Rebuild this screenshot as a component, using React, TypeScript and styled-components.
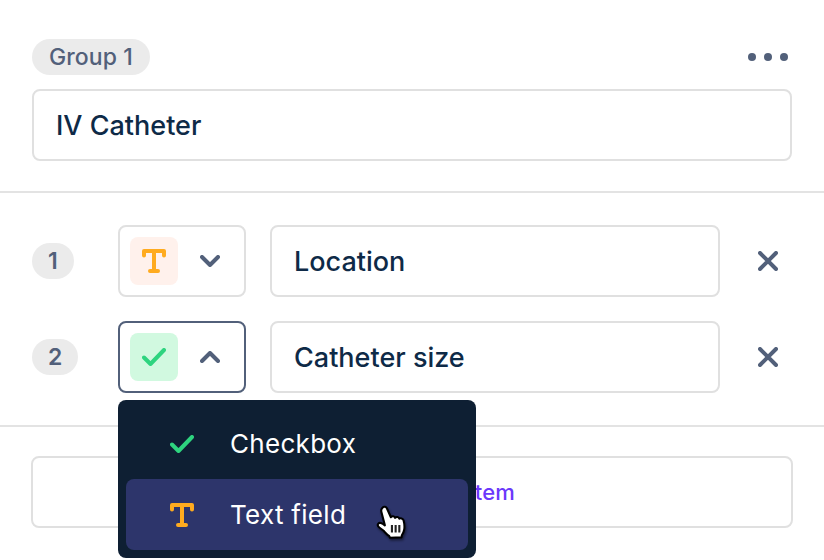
import styled, { createGlobalStyle } from 'styled-components';

const GlobalStyle = createGlobalStyle`
  html, body {
    margin: 0;
    padding: 0;
    background: #fff;
    font-family: 'Inter', 'Liberation Sans', sans-serif;
  }
`;

const Page = styled.div`
  width: 824px;
  height: 560px;
  overflow: hidden;
  box-sizing: border-box;
`;

const GroupSection = styled.section`
  padding: 39px 32px 30px;
  border-bottom: 2px solid #e3e3e3;
`;

const GroupHeader = styled.div`
  display: flex;
  align-items: center;
  justify-content: space-between;
  margin-bottom: 14px;
`;

const Pill = styled.span`
  display: inline-flex;
  align-items: center;
  justify-content: center;
  height: 36px;
  padding: 0 17px;
  box-sizing: border-box;
  border-radius: 18px;
  background: #ebebeb;
  color: #52607a;
  font-size: 23px;
  font-weight: 500;
  letter-spacing: 0.1px;
`;

const NumberPill = styled(Pill)`
  padding: 0 16px;
  font-weight: 600;
`;

const NumberCell = styled.div`
  width: 86px;
`;

const MoreIcon = styled.div`
  display: flex;
  gap: 8px;
  margin-right: 4px;
`;

const Dot = styled.i`
  display: block;
  width: 8px;
  height: 8px;
  border-radius: 50%;
  background: #52607a;
`;

const Field = styled.div`
  flex: 1;
  height: 72px;
  display: flex;
  align-items: center;
  padding: 0 22px;
  box-sizing: border-box;
  border: 2px solid #e0e0e0;
  border-radius: 8px;
  background: #fff;
  color: #0e2a47;
  font-size: 27px;
  font-weight: 500;
  letter-spacing: 0;
`;

const ItemsSection = styled.section`
  padding: 32px 32px 32px;
  display: flex;
  flex-direction: column;
  gap: 24px;
  border-bottom: 2px solid #e3e3e3;
`;

const Row = styled.div`
  display: flex;
  align-items: center;
`;

const TypeSelect = styled.div<{ $open?: boolean }>`
  position: relative;
  width: 128px;
  height: 72px;
  margin-right: 24px;
  flex-shrink: 0;
  display: flex;
  align-items: center;
  padding-left: 10px;
  box-sizing: border-box;
  border: 2px solid ${(p) => (p.$open ? '#52607a' : '#e0e0e0')};
  border-radius: 8px;
`;

const Tile = styled.div<{ $bg: string }>`
  width: 48px;
  height: 48px;
  border-radius: 8px;
  background: ${(p) => p.$bg};
  display: flex;
  align-items: center;
  justify-content: center;
  margin-right: 22px;
`;

const Chevron = styled.svg`
  display: block;
`;

const RemoveButton = styled.div`
  width: 72px;
  display: flex;
  justify-content: flex-end;
  padding-right: 14px;
  box-sizing: border-box;
`;

const Menu = styled.div`
  position: absolute;
  z-index: 2;
  top: 77px;
  left: -2px;
  width: 358px;
  height: 158px;
  padding: 8px;
  box-sizing: border-box;
  border-radius: 8px;
  background: #0e1f33;
  display: flex;
  flex-direction: column;
  justify-content: flex-end;
`;

const MenuItem = styled.div<{ $active?: boolean }>`
  position: relative;
  height: 72px;
  display: flex;
  align-items: center;
  padding-left: 44px;
  border-radius: 8px;
  background: ${(p) => (p.$active ? '#2d356b' : 'transparent')};
  color: #fff;
  font-size: 26px;
  font-weight: 400;
  letter-spacing: 0.3px;
`;

const MenuLabel = styled.span`
  margin-left: 36px;
`;

const Pointer = styled.svg`
  position: absolute;
  left: 250px;
  top: 25px;
  filter: drop-shadow(1px 2px 1px rgba(0, 0, 0, 0.45));
`;

const Footer = styled.section`
  padding: 29px 31px 0;
`;

const AddButton = styled.div`
  height: 72px;
  display: flex;
  align-items: center;
  justify-content: center;
  gap: 8px;
  box-sizing: border-box;
  border: 2px solid #e0e0e0;
  border-radius: 8px;
  color: #6b38fb;
  font-size: 22px;
  font-weight: 500;
  letter-spacing: 0.2px;
`;

const TextIcon = () => (
  <svg width="24" height="24" viewBox="0 0 24 24" fill="none" stroke="#ffab1f" strokeWidth="4" strokeLinecap="round" strokeLinejoin="round">
    <path d="M2 6.5V2h20v4.5M12 2v20M8 22h8" />
  </svg>
);

const CheckIcon = () => (
  <svg width="24" height="18" viewBox="0 0 24 18" fill="none" stroke="#2ed47f" strokeWidth="4" strokeLinecap="round" strokeLinejoin="round">
    <path d="M2 9.5 8.5 16 22 2" />
  </svg>
);

const ChevronIcon = ({ up }: { up?: boolean }) => (
  <Chevron width="20" height="12" viewBox="0 0 20 12" fill="none" stroke="#52607a" strokeWidth="4" strokeLinecap="round" strokeLinejoin="round">
    <path d={up ? 'M2 10l8-8 8 8' : 'M2 2l8 8 8-8'} />
  </Chevron>
);

const CloseIcon = () => (
  <svg width="20" height="20" viewBox="0 0 20 20" fill="none" stroke="#52607a" strokeWidth="4" strokeLinecap="round">
    <path d="M2 2l16 16M18 2 2 18" />
  </svg>
);

const PlusIcon = () => (
  <svg width="14" height="14" viewBox="0 0 14 14" fill="none" stroke="#6b38fb" strokeWidth="3" strokeLinecap="round">
    <path d="M7 2v10M2 7h10" />
  </svg>
);

const HandCursor = () => (
  <Pointer width="34" height="38" viewBox="0 0 32 36">
    <path
      d="M6 3.5c1.5-1.5 3.5-1 4.3.8l3.7 8.2c1-1.4 3.4-1.2 4 .6 1-1.2 3.4-1 4 .8 1-.8 3.4-.4 4 1.5.8 3 1.2 6 .6 9-.4 2.4-1.4 4-2.2 5.2l-.3 2-11 .4-.8-1.8c-2-1-3.4-3-5.2-4.8-1.8-1.6-4.4-3-5.2-4.4-1-1.8.6-3.6 2.6-3 1.2.4 2.8 1.4 3.8 2.2L5 7.5C4.6 6 5 4.5 6 3.5z"
      fill="#fff"
      stroke="#000"
      strokeWidth="2"
      strokeLinejoin="round"
    />
    <path d="M15 20v7M18.5 20v7M22 20v7" stroke="#222" strokeWidth="2" fill="none" />
  </Pointer>
);

export default function App() {
  return (
    <Page>
      <GlobalStyle />
      <GroupSection>
        <GroupHeader>
          <Pill>Group 1</Pill>
          <MoreIcon>
            <Dot />
            <Dot />
            <Dot />
          </MoreIcon>
        </GroupHeader>
        <Row>
          <Field>IV Catheter</Field>
        </Row>
      </GroupSection>
      <ItemsSection>
        <Row>
          <NumberCell>
            <NumberPill>1</NumberPill>
          </NumberCell>
          <TypeSelect>
            <Tile $bg="#fff1ec">
              <TextIcon />
            </Tile>
            <ChevronIcon />
          </TypeSelect>
          <Field>Location</Field>
          <RemoveButton>
            <CloseIcon />
          </RemoveButton>
        </Row>
        <Row>
          <NumberCell>
            <NumberPill>2</NumberPill>
          </NumberCell>
          <TypeSelect $open>
            <Tile $bg="#d1f9e0">
              <CheckIcon />
            </Tile>
            <ChevronIcon up />
            <Menu>
              <MenuItem>
                <CheckIcon />
                <MenuLabel>Checkbox</MenuLabel>
              </MenuItem>
              <MenuItem $active>
                <TextIcon />
                <MenuLabel>Text field</MenuLabel>
                <HandCursor />
              </MenuItem>
            </Menu>
          </TypeSelect>
          <Field>Catheter size</Field>
          <RemoveButton>
            <CloseIcon />
          </RemoveButton>
        </Row>
      </ItemsSection>
      <Footer>
        <AddButton>
          <PlusIcon />
          Add another item
        </AddButton>
      </Footer>
    </Page>
  );
}
